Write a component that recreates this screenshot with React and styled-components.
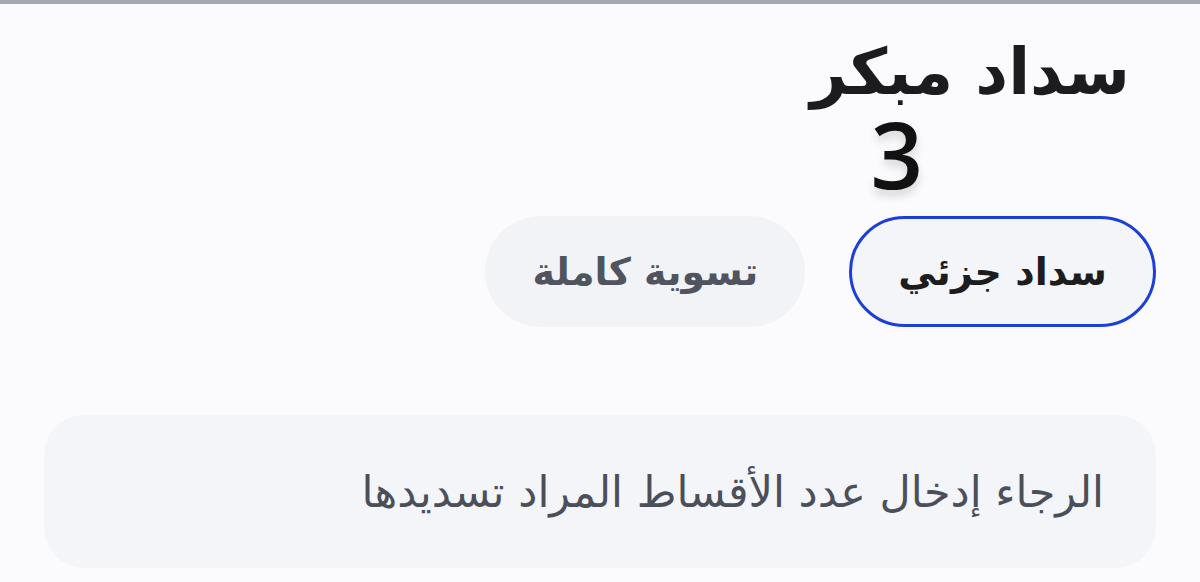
import styled, { createGlobalStyle } from 'styled-components';

const GlobalStyle = createGlobalStyle`
  html, body {
    margin: 0;
    padding: 0;
    background: #fbfbfd;
  }
  body {
    font-family: "DejaVu Sans", "Noto Sans", sans-serif;
  }
`;

const Page = styled.div`
  width: 1200px;
  height: 582px;
  overflow: hidden;
  background: #fbfbfd;
  border-top: 4px solid #a3a8b3;
  box-sizing: border-box;
  direction: rtl;
`;

const Header = styled.div`
  display: flex;
  flex-direction: column;
  align-items: flex-start;
  padding: 30px 70px 0 0;
`;

const Title = styled.h1`
  margin: 0;
  font-size: 64px;
  font-weight: 700;
  line-height: 76px;
  color: #1c1c1e;
`;

const Count = styled.div`
  margin-right: 207px;
  font-family: "Open Sans", sans-serif;
  font-size: 92px;
  font-weight: 600;
  line-height: 88px;
  color: #111;
  text-shadow: 0 6px 10px rgba(0, 0, 0, 0.15);
`;

const Options = styled.div`
  display: flex;
  gap: 44px;
  padding: 18px 44px 0 0;
`;

const Option = styled.button`
  height: 111px;
  padding: 0 ${p => (p.$active ? '46px' : '44px')};
  border-radius: 56px;
  border: ${p => (p.$active ? '3px solid #1c3fd8' : '3px solid transparent')};
  background: ${p => (p.$active ? '#f4f5f9' : '#f2f3f7')};
  color: ${p => (p.$active ? '#1d1d20' : '#50545f')};
  font-family: "DejaVu Sans", sans-serif;
  font-size: 38px;
  font-weight: 700;
  direction: rtl;
  cursor: pointer;
`;

const Field = styled.div`
  display: flex;
  align-items: center;
  margin: 88px 44px 0 44px;
  height: 153px;
  padding: 0 52px;
  border-radius: 40px;
  background: #f4f5f9;
`;

const Placeholder = styled.span`
  font-size: 43px;
  color: #4b4f5a;
`;

export default function App() {
  return (
    <>
      <GlobalStyle />
      <Page>
        <Header>
          <Title>سداد مبكر</Title>
          <Count>3</Count>
        </Header>
        <Options>
          <Option $active>سداد جزئي</Option>
          <Option>تسوية كاملة</Option>
        </Options>
        <Field>
          <Placeholder>الرجاء إدخال عدد الأقساط المراد تسديدها</Placeholder>
        </Field>
      </Page>
    </>
  );
}
